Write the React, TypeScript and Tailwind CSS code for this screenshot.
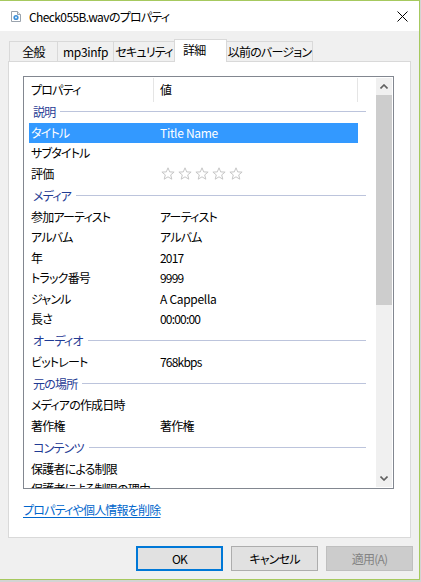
import React from "react";

type Row = { label: string; value?: string; stars?: boolean; selected?: boolean; latin?: boolean };
type Section = { group: string; rows: Row[] };

const sections: Section[] = [
  {
    group: "説明",
    rows: [
      { label: "タイトル", value: "Title Name", selected: true, latin: true },
      { label: "サブタイトル" },
      { label: "評価", stars: true },
    ],
  },
  {
    group: "メディア",
    rows: [
      { label: "参加アーティスト", value: "アーティスト" },
      { label: "アルバム", value: "アルバム" },
      { label: "年", value: "2017" },
      { label: "トラック番号", value: "9999" },
      { label: "ジャンル", value: "A Cappella", latin: true },
      { label: "長さ", value: "00:00:00" },
    ],
  },
  { group: "オーディオ", rows: [{ label: "ビットレート", value: "768kbps" }] },
  {
    group: "元の場所",
    rows: [{ label: "メディアの作成日時" }, { label: "著作権", value: "著作権" }],
  },
  {
    group: "コンテンツ",
    rows: [{ label: "保護者による制限" }, { label: "保護者による制限の理由" }],
  },
];

const tabs = [
  { name: "全般", w: "w-[49px]" },
  { name: "mp3infp", w: "w-[57px]" },
  { name: "セキュリティ", w: "w-[62px]" },
  { name: "詳細", w: "w-[53px]", active: true },
  { name: "以前のバージョン", w: "w-[87px]" },
];

function Star() {
  return (
    <svg width="14" height="13" viewBox="0 0 14 13" className="shrink-0">
      <path
        d="M7 0.8 L8.7 4.9 L13.1 5.1 L9.7 7.9 L10.8 12.2 L7 9.8 L3.2 12.2 L4.3 7.9 L0.9 5.1 L5.3 4.9 Z"
        fill="none"
        stroke="#c6c6c6"
        strokeWidth="1"
        strokeLinejoin="round"
      />
    </svg>
  );
}

function FileIcon() {
  return (
    <svg width="10" height="11" viewBox="0 0 10 11">
      <path d="M0.5 0.5 H6.5 L9.5 3.5 V10.5 H0.5 Z" fill="#ffffff" stroke="#9aa3ad" />
      <path d="M6.5 0.5 V3.5 H9.5" fill="#e6eaee" stroke="#9aa3ad" />
      <circle cx="5" cy="6.5" r="2.6" fill="#3c8fd8" />
      <circle cx="5" cy="6.5" r="0.9" fill="#ffffff" />
    </svg>
  );
}

function Chevron({ up }: { up?: boolean }) {
  return (
    <svg width="8" height="5" viewBox="0 0 8 5">
      <path
        d={up ? "M0.5 4.5 L4 1 L7.5 4.5" : "M0.5 0.5 L4 4 L7.5 0.5"}
        fill="none"
        stroke="#606060"
        strokeWidth="1.6"
      />
    </svg>
  );
}

export default function App() {
  return (
    <div className="w-[421px] h-[582px] bg-[#d4d4d4] overflow-hidden font-['Noto_Sans_CJK_JP','Noto_Sans',sans-serif] [font-feature-settings:'palt'] text-[12px] tracking-[-0.8px] text-black">
      <div className="w-[420px] h-[580px] border-t border-r border-b border-[#a6c95e] bg-[#f0f0f0] flex flex-col">
        {/* title bar */}
        <div className="h-[30px] bg-white flex items-center shrink-0">
          <div className="ml-[11px] mt-[1px]">
            <FileIcon />
          </div>
          <span className="ml-[8px] leading-[20px] mt-[1px] whitespace-nowrap">
            <span className="tracking-[-0.6px]">Check055B.wav</span>のプロパティ
          </span>
          <svg width="11" height="11" viewBox="0 0 11 11" className="ml-auto mr-[11px] mt-[1px]">
            <path d="M0.5 0.5 L10.5 10.5 M10.5 0.5 L0.5 10.5" stroke="#000" strokeWidth="1" />
          </svg>
        </div>

        <div className="flex flex-col pl-[8px] pt-[8px]">
          {/* tabs */}
          <div className="flex items-end h-[22px] pl-[1px]">
            {tabs.map((t, i) =>
              t.active ? (
                <div
                  key={t.name}
                  className={`${t.w} shrink-0 h-[23px] -mb-px -ml-px relative z-10 bg-white border border-b-0 border-[#d9d9d9] flex items-center pl-[8px] pb-[3px] leading-[16px] whitespace-nowrap`}
                >
                  {t.name}
                </div>
              ) : (
                <div
                  key={t.name}
                  className={`${t.w} shrink-0 h-[20px] ${i === 0 ? "" : "-ml-px"} bg-[#f0f0f0] border border-b-0 border-[#d9d9d9] flex items-center justify-center leading-[16px] whitespace-nowrap ${
                    t.name === "mp3infp" ? "tracking-[-0.3px]" : ""
                  }`}
                >
                  {t.name}
                </div>
              )
            )}
          </div>

          {/* tab page */}
          <div className="w-[403px] h-[477px] bg-white border border-[#d9d9d9] p-[14px] flex flex-col">
            <div className="w-[371px] h-[413px] border border-[#828790] flex overflow-hidden">
              <div className="flex-1 relative overflow-hidden">
                {/* column header */}
                <div className="h-[23px] flex items-start">
                  <div className="w-[129px] pl-[7px] pt-[4px] leading-[18px]">プロパティ</div>
                  <div className="w-px h-[24px] mt-px bg-[#e5e5e5]" />
                  <div className="w-[203px] pl-[6px] pt-[4px] leading-[18px]">値</div>
                  <div className="w-px h-[24px] mt-px bg-[#e5e5e5]" />
                </div>
                {sections.map((s) => (
                  <div key={s.group}>
                    <div className="h-[22.5px] ml-[5px] w-[337px] flex items-center">
                      <span className="pl-[4px] text-[#1f3b94] leading-[16px] mt-px">{s.group}</span>
                      <div className="flex-1 ml-[5px] h-px bg-[#bcc4dc]" />
                    </div>
                    {s.rows.map((r) => (
                      <div
                        key={r.label}
                        className={`h-[20.5px] ml-[5px] w-[329px] flex items-center ${
                          r.selected ? "bg-[#3399ff] text-white" : ""
                        }`}
                      >
                        <div className="w-[131px] pl-[2px] leading-[16px] whitespace-nowrap">{r.label}</div>
                        <div
                          className={`flex-1 leading-[16px] whitespace-nowrap ${
                            r.latin ? "tracking-[-0.3px]" : ""
                          }`}
                        >
                          {r.stars ? (
                            <div className="flex gap-[3px] ml-[1px]">
                              <Star />
                              <Star />
                              <Star />
                              <Star />
                              <Star />
                            </div>
                          ) : (
                            r.value
                          )}
                        </div>
                      </div>
                    ))}
                  </div>
                ))}
              </div>
              {/* scrollbar */}
              <div className="w-[16px] my-px mr-px bg-[#f0f0f0] flex flex-col">
                <div className="h-[17px] flex items-center justify-center">
                  <Chevron up />
                </div>
                <div className="h-[210px] bg-[#cdcdcd]" />
                <div className="flex-1" />
                <div className="h-[17px] flex items-center justify-center">
                  <Chevron />
                </div>
              </div>
            </div>
            <div className="mt-[13px] leading-[16px] text-[#0066cc] underline underline-offset-2 self-start">
              プロパティや個人情報を削除
            </div>
          </div>

          {/* dialog buttons */}
          <div className="flex justify-end mt-[8px] pr-[6px] gap-[8px]">
            <div className="w-[87px] h-[25px] bg-[#e1e1e1] border-2 border-[#0078d7] flex items-center justify-center leading-[16px]">
              OK
            </div>
            <div className="w-[87px] h-[25px] bg-[#e1e1e1] border border-[#adadad] flex items-center justify-center leading-[16px]">
              キャンセル
            </div>
            <div className="w-[87px] h-[25px] bg-[#cccccc] border border-[#bfbfbf] flex items-center justify-center leading-[16px] text-[#838383]">
              適用(A)
            </div>
          </div>
        </div>
      </div>
    </div>
  );
}
